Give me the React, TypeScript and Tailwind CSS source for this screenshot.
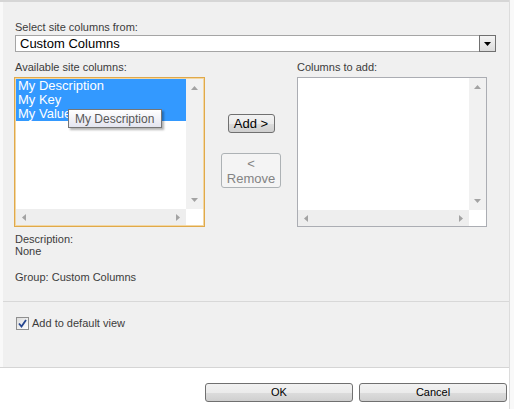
const font = { fontFamily: '"Liberation Sans", Arial, sans-serif' };

function ArrowUp() {
  return (
    <svg width="7" height="4" viewBox="0 0 7 4">
      <path d="M0 4 L3.5 0 L7 4 Z" fill="#a3a3a3" />
    </svg>
  );
}
function ArrowDown() {
  return (
    <svg width="7" height="4" viewBox="0 0 7 4">
      <path d="M0 0 L7 0 L3.5 4 Z" fill="#a3a3a3" />
    </svg>
  );
}
function ArrowLeft() {
  return (
    <svg width="4" height="7" viewBox="0 0 4 7">
      <path d="M4 0 L4 7 L0 3.5 Z" fill="#a3a3a3" />
    </svg>
  );
}
function ArrowRight() {
  return (
    <svg width="4" height="7" viewBox="0 0 4 7">
      <path d="M0 0 L4 3.5 L0 7 Z" fill="#a3a3a3" />
    </svg>
  );
}

function ListBox({ focused, children }: { focused?: boolean; children?: React.ReactNode }) {
  return (
    <div
      className={
        focused
          ? 'h-[150px] border border-[#e0a94a] shadow-[inset_0_0_0_1px_#f3d7a2] p-px bg-white'
          : 'h-[150px] border border-[#abadb3] bg-white'
      }
    >
      <div className="grid h-full grid-cols-[1fr_17px] grid-rows-[1fr_16px]">
        <div className="overflow-hidden">{children}</div>
        <div className="flex flex-col items-center justify-between bg-[#f1f1f1] py-[7px]">
          <ArrowUp />
          <ArrowDown />
        </div>
        <div className="flex items-center justify-between bg-[#eeeeee] px-[6px]">
          <ArrowLeft />
          <ArrowRight />
        </div>
        <div className="bg-white" />
      </div>
    </div>
  );
}

const winBtn =
  'rounded-[3px] border border-[#707070] bg-[linear-gradient(#f2f2f2_0%,#ebebeb_50%,#dddddd_50%,#cfcfcf_100%)] text-black';

export default function App() {
  return (
    <div className="flex h-[409px] w-[514px] bg-white" style={font}>
      <div className="flex w-[509px] flex-col">
        <div className="h-[2px] bg-[#d6d6d6]" />
        <div className="flex h-[365px] flex-col border-l-[3px] border-[#f9f9f9] bg-[#f0f0f0] text-[11px] text-[#3c3c3c]">
          <div className="pl-[12px] pr-[10px]">
            <div className="mt-[19px] h-[13px] leading-[13px]">Select site columns from:</div>
            <div className="mt-px flex h-[17px] w-[481px] items-stretch border border-[#a5a5a5] bg-white">
              <div className="flex-1 pl-[4px] text-[13px] leading-[15px] text-black">Custom Columns</div>
              <div className="-my-px -mr-px flex w-[17px] items-center justify-center border border-[#707070] bg-[linear-gradient(#f4f4f4,#dcdcdc)]">
                <svg width="7" height="4" viewBox="0 0 7 4">
                  <path d="M0 0 L7 0 L3.5 4 Z" fill="#000" />
                </svg>
              </div>
            </div>

            <div className="mt-[9px] flex">
              <div className="w-[191px] -ml-px">
                <div className="h-[13px] pl-px leading-[13px]">Available site columns:</div>
                <div className="relative mt-[3px]">
                  <ListBox focused>
                    <div className="bg-[#3399ff] text-[13px] leading-[14px] text-white">
                      <div className="pl-[2px]">My Description</div>
                      <div className="pl-[2px]">My Key</div>
                      <div className="pl-[2px]">My Value</div>
                    </div>
                  </ListBox>
                  <div className="absolute left-[54px] top-[32px] flex h-[19px] w-[94px] items-center border border-[#767676] bg-[linear-gradient(#ffffff,#e4e5f0)] pl-[6px] text-[12px] text-[#575757] shadow-[2px_2px_2px_rgba(0,0,0,0.3)]">
                    My Description
                  </div>
                </div>
              </div>

              <div className="flex w-[92px] flex-col items-center pt-[53px]">
                <button className={winBtn + ' h-[19px] w-[47px] text-[13px] leading-[17px]'}>Add &gt;</button>
                <button className="mt-[20px] h-[35px] w-[60px] rounded-[3px] border border-[#adb2b5] bg-[#f4f4f4] text-[13px] leading-[15px] text-[#838383]">
                  &lt;
                  <br />
                  Remove
                </button>
              </div>

              <div className="w-[190px]">
                <div className="h-[13px] leading-[13px]">Columns to add:</div>
                <div className="mt-[3px]">
                  <ListBox />
                </div>
              </div>
            </div>

            <div className="mt-[6px] leading-[12px]">
              <div>Description:</div>
              <div>None</div>
              <div className="mt-[14px]">Group: Custom Columns</div>
            </div>
          </div>

          <div className="mt-[18px] h-px bg-[#d8d8d8]" />

          <div className="mt-[15px] flex items-center pl-[13px]">
            <div className="flex h-[13px] w-[13px] items-center justify-center border border-[#8f8f8f] bg-[linear-gradient(135deg,#dcdcdc,#ffffff)]">
              <svg width="9" height="9" viewBox="0 0 9 9">
                <path d="M1 4.5 L3.5 7.5 L8 1" stroke="#26468f" strokeWidth="1.8" fill="none" />
              </svg>
            </div>
            <span className="ml-[3px] leading-[13px]">Add to default view</span>
          </div>
        </div>
        <div className="h-px bg-[#d5d5d5]" />
        <div className="flex flex-1 justify-end gap-[6px] bg-white pr-[2px] pt-[15px] text-[11px]">
          <button className={winBtn + ' h-[19px] w-[148px] leading-[17px]'}>OK</button>
          <button className={winBtn + ' h-[19px] w-[148px] leading-[17px]'}>Cancel</button>
        </div>
      </div>
      <div className="w-px bg-[#dcdcdc]" />
      <div className="flex-1 bg-[#f9f9f9]" />
    </div>
  );
}
